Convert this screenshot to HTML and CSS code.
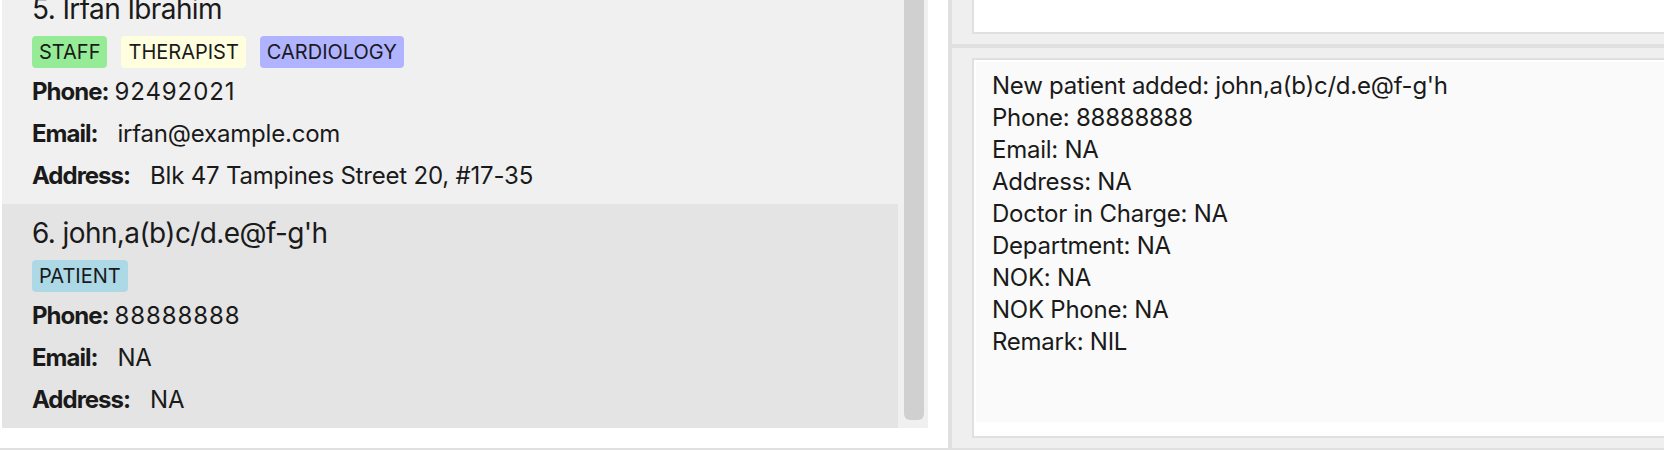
FILE: index.html
```html
<!DOCTYPE html>
<html>
<head>
<meta charset="utf-8">
<link rel="stylesheet" href="styles.css">
</head>
<body>
<div class="window">
  <div class="main">
    <div class="left-pane">
      <div class="list-view">
        <div class="cards">
          <div class="card card-odd scrolled">
            <div class="name">5. Irfan Ibrahim</div>
            <div class="tags">
              <span class="tag tag-staff">STAFF</span>
              <span class="tag tag-therapist">THERAPIST</span>
              <span class="tag tag-cardiology">CARDIOLOGY</span>
            </div>
            <div class="row"><span class="label label-phone">Phone:</span><span class="value value-phone">92492021</span></div>
            <div class="row"><span class="label">Email:</span><span class="value">irfan@example.com</span></div>
            <div class="row"><span class="label">Address:</span><span class="value">Blk 47 Tampines Street 20, #17-35</span></div>
          </div>
          <div class="card card-even">
            <div class="name">6. john,a(b)c/d.e@f-g'h</div>
            <div class="tags">
              <span class="tag tag-patient">PATIENT</span>
            </div>
            <div class="row"><span class="label label-phone">Phone:</span><span class="value value-phone">88888888</span></div>
            <div class="row"><span class="label">Email:</span><span class="value">NA</span></div>
            <div class="row"><span class="label">Address:</span><span class="value">NA</span></div>
          </div>
        </div>
        <div class="scroll-track">
          <div class="scroll-thumb"></div>
        </div>
      </div>
    </div>
    <div class="divider-v"></div>
    <div class="right-pane">
      <div class="top-section">
        <div class="top-box"></div>
      </div>
      <div class="divider-h"></div>
      <div class="bottom-section">
        <div class="result-box">
          <div class="result-content">
            <div class="result-line">New patient added: john,a(b)c/d.e@f-g'h</div>
            <div class="result-line">Phone: 88888888</div>
            <div class="result-line">Email: NA</div>
            <div class="result-line">Address: NA</div>
            <div class="result-line">Doctor in Charge: NA</div>
            <div class="result-line">Department: NA</div>
            <div class="result-line">NOK: NA</div>
            <div class="result-line">NOK Phone: NA</div>
            <div class="result-line">Remark: NIL</div>
          </div>
        </div>
      </div>
    </div>
  </div>
  <div class="bottom-line"></div>
</div>
</body>
</html>
```

FILE: styles.css
```css
html, body {
  margin: 0;
  padding: 0;
  background: #ffffff;
  font-family: "Inter", "Noto Sans", sans-serif;
  color: #1a1a1a;
}

.window {
  width: 1664px;
  height: 450px;
  display: flex;
  flex-direction: column;
  overflow: hidden;
}

.main {
  height: 448px;
  display: flex;
  flex-direction: row;
}

.left-pane {
  width: 948px;
  box-sizing: border-box;
  padding: 0 20px 20px 2px;
  background: #ffffff;
}

.list-view {
  height: 428px;
  background: #f0f0f0;
  display: flex;
  flex-direction: row;
  overflow: hidden;
}

.cards {
  width: 896px;
  display: flex;
  flex-direction: column;
}

.card {
  height: 224px;
  box-sizing: border-box;
  padding: 12px 0 7px 30px;
  flex-shrink: 0;
}

.scrolled {
  margin-top: -20px;
}

.card-odd {
  background: #f0f0f0;
}

.card-even {
  background: #e4e4e4;
}

.name {
  font-size: 28px;
  line-height: 34px;
  height: 34px;
  letter-spacing: -0.6px;
  white-space: nowrap;
}

.tags {
  margin-top: 10px;
  display: flex;
  gap: 14px;
  height: 32px;
}

.tag {
  display: inline-block;
  height: 32px;
  line-height: 32px;
  padding: 0 7px;
  font-size: 20px;
  border-radius: 4px;
  color: #1a1a1a;
}

.tag-staff { background: #96ec96; }
.tag-therapist { background: #ffffe0; }
.tag-cardiology { background: #b0b3ff; }
.tag-patient { background: #add8e6; }

.tags + .row {
  margin-top: 3px;
}

.row {
  height: 42px;
  line-height: 42px;
  font-size: 24px;
  white-space: nowrap;
  display: flex;
}

.label {
  font-weight: 700;
  letter-spacing: -1px;
  margin-right: 20px;
}

.label-phone {
  margin-right: 6px;
}

.value {
  letter-spacing: -0.2px;
}

.value-phone {
  letter-spacing: 0.9px;
}

.scroll-track {
  width: 30px;
  padding: 0 4px 8px 6px;
  box-sizing: border-box;
  display: flex;
}

.scroll-thumb {
  width: 20px;
  height: 420px;
  background: #d0d0d0;
  border-radius: 0 0 6px 6px;
}

.divider-v {
  width: 4px;
  background: #e0e0e0;
}

.right-pane {
  flex: 1;
  background: #efefef;
  display: flex;
  flex-direction: column;
  overflow: hidden;
}

.top-section {
  padding: 0 0 10px 20px;
}

.top-box {
  width: 720px;
  height: 34px;
  box-sizing: border-box;
  background: #ffffff;
  border-left: 2px solid #e0e0e0;
  border-bottom: 2px solid #e0e0e0;
}

.divider-h {
  height: 4px;
  background: #e0e0e0;
}

.bottom-section {
  padding: 10px 0 10px 20px;
}

.result-box {
  width: 720px;
  height: 380px;
  box-sizing: border-box;
  border: 2px solid #e0e0e0;
  border-right: none;
  background: #ffffff;
  padding: 2px 0 14px 2px;
}

.result-content {
  height: 100%;
  box-sizing: border-box;
  background: #fafafa;
  padding: 8px 0 0 16px;
}

.result-line {
  font-size: 24px;
  line-height: 32px;
  letter-spacing: -0.25px;
  white-space: nowrap;
  color: #1a1a1a;
}

.bottom-line {
  height: 2px;
  background: #e0e0e0;
}
```
